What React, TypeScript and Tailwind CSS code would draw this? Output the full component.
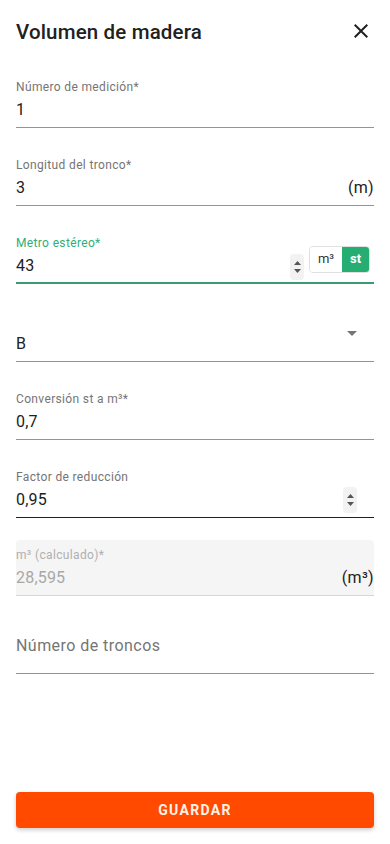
import type { ReactNode } from "react";

function Spinner() {
  return (
    <span className="flex h-[26px] w-[14px] flex-col items-center justify-center gap-[4px] rounded-sm bg-[#f2f2f2]">
      <svg width="7" height="4" viewBox="0 0 7 4">
        <path d="M0 4 L3.5 0 L7 4 Z" fill="#555" />
      </svg>
      <svg width="7" height="4" viewBox="0 0 7 4">
        <path d="M0 0 L3.5 4 L7 0 Z" fill="#555" />
      </svg>
    </span>
  );
}

function Field({
  label,
  value,
  right,
  labelClass = "text-[#757575]",
  valueClass = "text-[#212121]",
  lineClass = "border-b border-[#949494]",
  boxClass = "",
}: {
  label?: string;
  value: string;
  right?: ReactNode;
  labelClass?: string;
  valueClass?: string;
  lineClass?: string;
  boxClass?: string;
}) {
  return (
    <div className={`h-[56px] pt-[7px] ${lineClass} ${boxClass}`}>
      <div className={`h-4 text-xs leading-4 tracking-[0.35px] ${labelClass}`}>{label}</div>
      <div className="mt-[3px] flex h-6 items-center">
        <span className={`flex-1 text-base leading-6 tracking-[0.2px] ${valueClass}`}>{value}</span>
        {right}
      </div>
    </div>
  );
}

export default function App() {
  return (
    <div
      className="flex min-h-[844px] flex-col bg-white px-4"
      style={{ fontFamily: "Roboto, 'Noto Sans', sans-serif" }}
    >
      <header className="flex h-[72px] items-start justify-between pt-[20px]">
        <h1 className="text-[20.5px] font-medium leading-6 tracking-[0.15px] text-[#212121]">Volumen de madera</h1>
        <svg width="24" height="24" viewBox="0 0 24 24" className="mr-[1px] -mt-[1px]">
          <path d="M19 6.41 17.59 5 12 10.59 6.41 5 5 6.41 10.59 12 5 17.59 6.41 19 12 13.41 17.59 19 19 17.59 13.41 12z" fill="#212121" />
        </svg>
      </header>

      <div className="flex flex-col gap-[22px]">
        <Field label="Número de medición*" value="1" />
        <Field
          label="Longitud del tronco*"
          value="3"
          right={<span className="text-base tracking-[0.3px] text-[#212121]">(m)</span>}
        />
        <Field
          label="Metro estéreo*"
          value="43"
          labelClass="text-[#2fae77]"
          lineClass="border-b-2 border-[#3a9a72]"
          right={
            <div className="-mt-[14px] flex items-center gap-[5px] pr-[4px]">
              <span className="mt-[16px]">
                <Spinner />
              </span>
              <div className="flex h-[27px] overflow-hidden rounded-[4px] border border-[#e0e0e0] text-[13px]">
                <span className="flex w-[32px] items-center justify-center bg-white text-[#333]">m³</span>
                <span className="flex w-[27px] items-center justify-center bg-[#25ad72] font-bold text-white">st</span>
              </div>
            </div>
          }
        />
        <div className="relative h-[56px] border-b border-[#949494] pt-[26px]">
          <span className="text-base leading-6 text-[#212121]">B</span>
          <svg width="24" height="24" viewBox="0 0 24 24" className="absolute right-[10px] top-[15px]">
            <path d="M7 10l5 5 5-5z" fill="#757575" />
          </svg>
        </div>
        <Field label="Conversión st a m³*" value="0,7" />
        <Field
          label="Factor de reducción"
          value="0,95"
          lineClass="border-b border-[#212121]"
          right={
            <span className="mr-[17px]">
              <Spinner />
            </span>
          }
        />
        <Field
          label="m³ (calculado)*"
          value="28,595"
          labelClass="text-[#b0b0b0]"
          valueClass="text-[#a8a8a8]"
          lineClass="border-b border-[#d6d6d6]"
          boxClass="rounded-t-[4px] bg-[#f5f5f5]"
          right={<span className="text-base tracking-[0.3px] text-[#212121]">(m³)</span>}
        />
        <div className="h-[56px] border-b border-[#949494] pt-[16px]">
          <span className="text-base leading-6 tracking-[0.45px] text-[#757575]">Número de troncos</span>
        </div>
      </div>

      <div className="flex-1" />
      <button className="mb-[16px] h-[36px] w-full rounded-[4px] bg-[#ff4a00] text-sm font-bold tracking-[1.3px] text-[#fff3e8] shadow-[0_2px_4px_rgba(0,0,0,0.2)]">
        GUARDAR
      </button>
    </div>
  );
}
